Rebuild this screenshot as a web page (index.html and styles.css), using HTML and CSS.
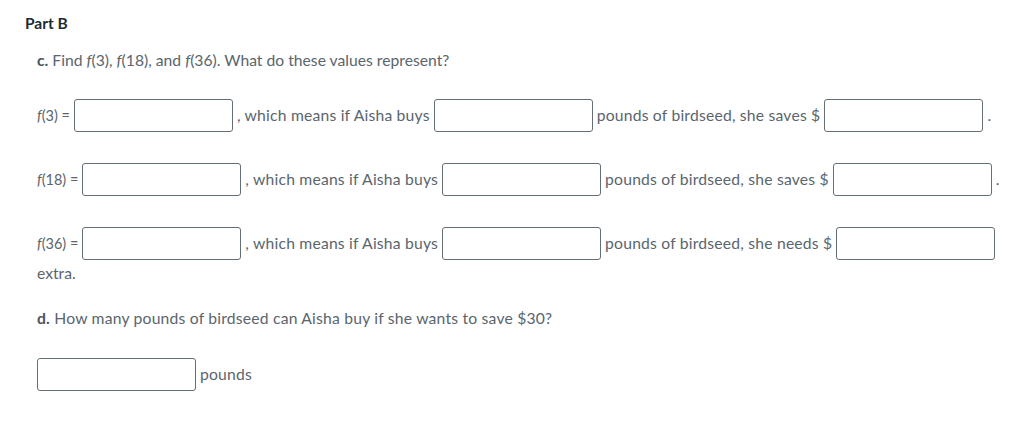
FILE: index.html
```html
<!DOCTYPE html>
<html lang="en">
<head>
<meta charset="utf-8">
<title>Part B</title>
<link rel="stylesheet" href="styles.css">
</head>
<body>
<div class="page">
  <h2 class="part">Part B</h2>
  <div class="question">
    <p class="prompt"><b>c.</b> Find <i>f</i>(3), <i>f</i>(18), and <i>f</i>(36). What do these values represent?</p>
    <p class="row first"><span class="fx"><i>f</i>(3) =</span><span class="box"></span><span class="t">, which means if Aisha buys</span><span class="box"></span><span class="t">pounds of birdseed, she saves $</span><span class="box"></span><span class="t">.</span></p>
    <p class="row"><span class="fx"><i>f</i>(18) =</span><span class="box"></span><span class="t">, which means if Aisha buys</span><span class="box"></span><span class="t">pounds of birdseed, she saves $</span><span class="box"></span><span class="t">.</span></p>
    <p class="row last"><span class="fx"><i>f</i>(36) =</span><span class="box"></span><span class="t">, which means if Aisha buys</span><span class="box"></span><span class="t">pounds of birdseed, she needs $</span><span class="box"></span><span class="extra">extra.</span></p>
    <p class="prompt d"><b>d.</b> How many pounds of birdseed can Aisha buy if she wants to save $30?</p>
    <p class="row final"><span class="box"></span><span class="t">pounds</span></p>
  </div>
</div>
</body>
</html>
```
FILE: styles.css
```css
html, body {
  margin: 0;
  padding: 0;
  background: #ffffff;
}
.page {
  padding: 14px 0 0 25px;
  font-family: "Lato", "Liberation Sans", sans-serif;
  font-size: 15.7px;
  color: #5a656d;
}
.part {
  margin: 0;
  font-size: 15.5px;
  line-height: 18px;
  font-weight: 700;
  color: #1d2b33;
}
.question {
  padding-left: 12px;
}
.prompt {
  margin: 18px 0 0 0;
  line-height: 20px;
}
.prompt b {
  color: #4a555c;
}
.row {
  margin: 31px 0 0 0;
  line-height: 29px;
}
.row.first {
  margin-top: 29px;
}
.fx {
  font-size: 14.5px;
  vertical-align: middle;
  margin-right: 4px;
}
.box {
  display: inline-block;
  vertical-align: middle;
  width: 157px;
  height: 31px;
  border: 1px solid #646e75;
  border-radius: 3px;
  background: #fff;
}
.t {
  margin: 0 4px;
  vertical-align: middle;
  letter-spacing: 0.2px;
}
.extra {
  display: block;
  line-height: 20px;
  margin-top: 3px;
}
.prompt.d {
  margin-top: 25px;
  letter-spacing: 0.2px;
}
.row.final {
  margin-top: 30px;
}
```
